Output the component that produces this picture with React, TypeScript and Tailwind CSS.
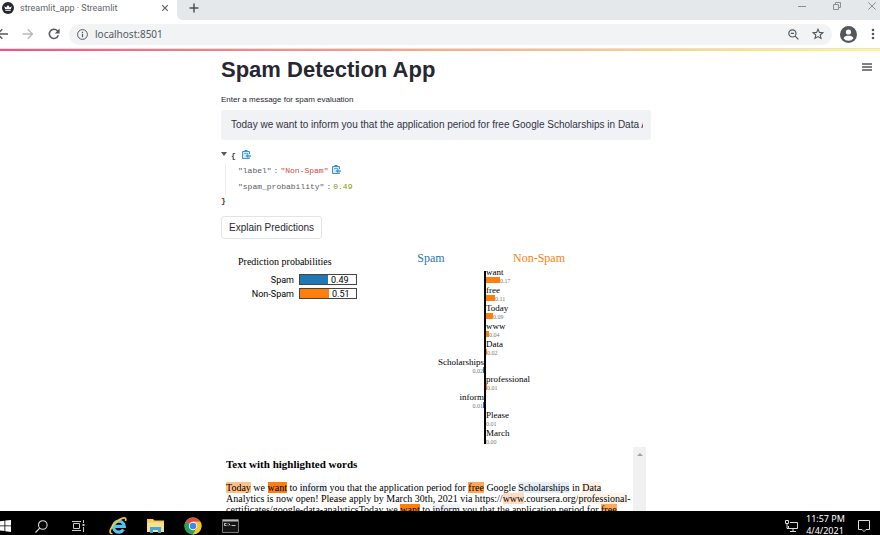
const message =
  "Today we want to inform you that the application period for free Google Scholarships in Data Analytics is now open! Please apply by March 30th, 2021 via https://www.coursera.org/professional-certificates/google-data-analytics";

type Weight = { word: string; value: string; bar: number; side: "spam" | "ham" };

const weights: Weight[] = [
  { word: "want", value: "0.17", bar: 14, side: "ham" },
  { word: "free", value: "0.11", bar: 9, side: "ham" },
  { word: "Today", value: "0.09", bar: 7, side: "ham" },
  { word: "www", value: "0.04", bar: 3, side: "ham" },
  { word: "Data", value: "0.02", bar: 1, side: "ham" },
  { word: "Scholarships", value: "0.02", bar: 1, side: "spam" },
  { word: "professional", value: "0.01", bar: 1, side: "ham" },
  { word: "inform", value: "0.01", bar: 1, side: "spam" },
  { word: "Please", value: "0.01", bar: 0, side: "ham" },
  { word: "March", value: "0.00", bar: 0, side: "ham" },
];

function TabStrip() {
  return (
    <div className="flex h-5 shrink-0 bg-white">
      <div className="flex w-[177px] items-center pr-2 pb-1 pl-[2px]">
        <svg className="size-3 shrink-0" viewBox="0 0 12 12" aria-hidden="true">
          <circle cx="6" cy="6" r="6" fill="#262730" />
          <path d="M2.2 4.2 4.2 5.4 6 3 7.8 5.4 9.8 4.2 8.8 7.2H3.2Z" fill="#fff" />
          <path d="M3.4 8h5.2v.8H3.4z" fill="#fff" />
        </svg>
        <span className="ml-[6px] flex-1 font-['Roboto',sans-serif] text-[9px] leading-4 whitespace-nowrap text-[#5f6368]">
          streamlit_app · Streamlit
        </span>
        <button aria-label="Close tab" className="text-[#5f6368]">
          <svg className="size-2" viewBox="0 0 8 8" stroke="currentColor" strokeWidth="1.2" fill="none">
            <path d="m1.2 1.2 5.6 5.6m0-5.6L1.2 6.8" />
          </svg>
        </button>
      </div>
      <div className="flex flex-1 items-center justify-between rounded-bl-md bg-[#e4e8eb] pr-1 pb-1 pl-3 text-[#4d5156]">
        <button aria-label="New tab">
          <svg className="size-[10px]" viewBox="0 0 10 10" stroke="currentColor" strokeWidth="1.5">
            <path d="M5 .5v9M.5 5h9" />
          </svg>
        </button>
        <div className="flex gap-[27px] pb-1 text-[#8b8f93]">
          <button aria-label="Minimize">
            <svg className="size-2" viewBox="0 0 8 8" stroke="currentColor">
              <path d="M0 4.5h8" />
            </svg>
          </button>
          <button aria-label="Restore">
            <svg className="size-2" viewBox="0 0 8 8" stroke="currentColor" fill="none">
              <path d="M.5 2.5h5v5h-5zM2.5 2.5v-2h5v5h-2" />
            </svg>
          </button>
          <button aria-label="Close">
            <svg className="size-2" viewBox="0 0 8 8" stroke="currentColor" fill="none">
              <path d="m.3.3 7.4 7.4m0-7.4L.3 7.7" />
            </svg>
          </button>
        </div>
      </div>
    </div>
  );
}

function Toolbar() {
  return (
    <div className="flex h-[29px] shrink-0 items-center border-b border-[#dfe2e8] bg-white pr-[2px] text-[#54585d]">
      <div className="flex w-[69px] items-center gap-[14px]">
        <button aria-label="Back" className="-ml-1">
          <svg className="size-3" viewBox="0 0 12 12" stroke="currentColor" strokeWidth="1.4" fill="none">
            <path d="M12 6H2M6.3 1.2 1.5 6l4.8 4.8" />
          </svg>
        </button>
        <button aria-label="Forward" className="text-[#b6b9bc]">
          <svg className="size-3" viewBox="0 0 12 12" stroke="currentColor" strokeWidth="1.3" fill="none">
            <path d="M.5 6h10M5.7 1.2 10.5 6l-4.8 4.8" />
          </svg>
        </button>
        <button aria-label="Reload">
          <svg className="size-3" viewBox="0 0 12 12" fill="none">
            <path d="M10.3 7.3A4.6 4.6 0 1 1 9.4 2.8L10.6 4" stroke="currentColor" strokeWidth="1.5" />
            <path d="M11.6.6v4.8H6.8z" fill="currentColor" />
          </svg>
        </button>
      </div>
      <div className="flex h-[21px] flex-1 items-center rounded-full bg-[#f1f3f4] px-2">
        <svg className="size-[11px] shrink-0" viewBox="0 0 11 11" fill="none" stroke="currentColor">
          <circle cx="5.5" cy="5.5" r="4.9" />
          <path d="M5.5 4.8v3.4M5.5 2.7v1.2" strokeWidth="1.2" />
        </svg>
        <input
          aria-label="Address"
          defaultValue="localhost:8501"
          className="ml-[7px] min-w-0 flex-1 bg-transparent text-[10px] leading-4 text-[#55595e] outline-none"
        />
        <button aria-label="Zoom">
          <svg className="size-[11px]" viewBox="0 0 11 11" fill="none" stroke="currentColor" strokeWidth="1.2">
            <circle cx="4.4" cy="4.4" r="3.6" />
            <path d="m7.1 7.1 3.3 3.3M2.8 4.4H6" />
          </svg>
        </button>
        <button aria-label="Bookmark" className="ml-[13px]">
          <svg className="size-3" viewBox="0 0 12 12" fill="none" stroke="currentColor" strokeWidth="1.1">
            <path d="m6 1.2 1.4 3.2 3.5.3-2.7 2.3.8 3.4L6 8.6l-3 1.8.8-3.4L1.1 4.7l3.5-.3z" />
          </svg>
        </button>
      </div>
      <button aria-label="Profile" className="ml-2">
        <svg className="size-[17px]" viewBox="0 0 17 17">
          <circle cx="8.5" cy="8.5" r="8.5" fill="#54585d" />
          <circle cx="8.5" cy="6" r="2.6" fill="#fff" />
          <path d="M3.5 12.3c.8-2 2.8-2.6 5-2.6s4.2.6 5 2.6a6.2 6.2 0 0 1-10 0z" fill="#fff" />
        </svg>
      </button>
      <button aria-label="Browser menu" className="mr-[2px] ml-[13px]">
        <svg className="h-3 w-[6px]" viewBox="0 0 6 12" fill="currentColor">
          <circle cx="3" cy="2" r="1.3" />
          <circle cx="3" cy="6" r="1.3" />
          <circle cx="3" cy="10" r="1.3" />
        </svg>
      </button>
    </div>
  );
}

function CopyIcon() {
  return (
    <button aria-label="Copy" className="mb-[3px] text-[#3b92d2]">
      <svg className="size-[9px]" viewBox="0 0 9 9" fill="none" stroke="currentColor">
        <path d="M7.5 4V1.5h-7v7h7V7.5" fill="#d3e8f7" />
        <path d="M2.5 1h3" strokeWidth="2" />
        <path d="M2 3.5h4" strokeWidth=".7" />
        <path d="M9 6H5.5" strokeWidth="1.3" />
        <path d="M6.3 3.8v4.4L3.6 6z" fill="currentColor" stroke="none" />
      </svg>
    </button>
  );
}

function JsonView() {
  return (
    <div className="mt-[9px] font-['Liberation_Mono',monospace] text-[8px] leading-[14px] whitespace-pre text-[#5a5d63]">
      <div className="flex items-center">
        <svg className="mb-1 h-1 w-[6px]" viewBox="0 0 6 4" fill="#4d5a60" aria-hidden="true">
          <path d="M0 0h6L3 4z" />
        </svg>
        <span className="mr-[6px] ml-1 font-bold text-[#3a3d44]">{"{"}</span>
        <CopyIcon />
      </div>
      <div className="ml-1 border-l border-[#ececec] pl-3 leading-4">
        <div className="flex items-center">
          <span>"label"</span>
          <span className="mx-[2px]">:</span>
          <span className="mr-1 text-[#cb4b45]">"Non-Spam"</span>
          <CopyIcon />
        </div>
        <div className="flex items-center">
          <span>"spam_probability"</span>
          <span className="mx-[2px]">:</span>
          <span className="text-[#859900]">0.49</span>
        </div>
      </div>
      <div className="leading-3 font-bold text-[#3a3d44]">{"}"}</div>
    </div>
  );
}

function Probabilities() {
  const rows = [
    { label: "Spam", value: "0.49", width: 28, color: "#1f77b4", y: 26 },
    { label: "Non-Spam", value: "0.51", width: 29, color: "#ff7f0e", y: 40 },
  ];
  return (
    <svg className="h-[60px] w-[150px] shrink-0" viewBox="0 0 150 60" role="img" aria-label="Prediction probabilities">
      <text x="17" y="17" fontSize="10" className="font-['Liberation_Serif',serif]">
        Prediction probabilities
      </text>
      {rows.map((r) => (
        <g key={r.label} className="font-['Roboto',sans-serif]" fontSize="9">
          <text x="73" y={r.y + 9} textAnchor="end">
            {r.label}
          </text>
          <rect x="78.5" y={r.y + 0.5} width="57" height="10" fill="#fff" stroke="#444" />
          <rect x="79" y={r.y + 1} width={r.width} height="9" fill={r.color} />
          <text x={82 + r.width} y={r.y + 9}>
            {r.value}
          </text>
        </g>
      ))}
    </svg>
  );
}

function WeightChart() {
  return (
    <svg
      className="h-[198px] w-[200px] shrink-0 font-['Liberation_Serif',serif]"
      viewBox="0 0 200 198"
      role="img"
      aria-label="Word weights"
    >
      <text x="60" y="14" fontSize="12" textAnchor="middle" fill="#1f77b4">
        Spam
      </text>
      <text x="168" y="14" fontSize="12" textAnchor="middle" fill="#ff7f0e">
        Non-Spam
      </text>
      {weights.map((w, i) => {
        const y = 27 + Math.round(i * 17.9);
        const ham = w.side === "ham";
        return (
          <g key={w.word} textAnchor={ham ? "start" : "end"}>
            <rect x={ham ? 115 : 113 - w.bar} y={y + 2} width={w.bar} height="6" fill={ham ? "#ff7f0e" : "#1f77b4"} />
            <text x={ham ? 115 : 113} y={y} fontSize="9">
              {w.word}
            </text>
            <text x={ham ? 115 + w.bar : 112} y={y + 8} fontSize="6" fill="#777">
              {w.value}
            </text>
          </g>
        );
      })}
      <path d="M114 23v173" stroke="#000" strokeWidth="2" />
    </svg>
  );
}

function Highlighted() {
  return (
    <div className="mt-px mr-[5px] flex font-['Liberation_Serif',serif]">
      <div className="min-w-0 flex-1 pt-[10px] pl-[5px]">
        <h2 className="text-[11px] leading-[14px] font-bold">Text with highlighted words</h2>
        <p className="mt-[11px] text-[10px] leading-[11px] [&_mark]:text-black">
          <mark className="bg-[#ffbf86]">Today</mark> we <mark className="bg-[#ff7f0e]">want</mark> to{" "}
          <mark className="bg-[#edf4f9]">inform</mark> you that the application period for{" "}
          <mark className="bg-[#ffa657]">free</mark> Google <mark className="bg-[#e3eef6]">Scholarships</mark> in{" "}
          <mark className="bg-[#fff0e2]">Data</mark> Analytics is now open! <mark className="bg-[#fff8f2]">Please</mark> apply by
          March 30th, 2021 via https://<mark className="bg-[#ffdcbd]">www</mark>.coursera.org/
          <mark className="bg-[#fff4ea]">professional</mark>-certificates/google-data-analyticsToday we{" "}
          <mark className="bg-[#ff7f0e]">want</mark> to <mark className="bg-[#edf4f9]">inform</mark> you that the application
          period for <mark className="bg-[#ffa657]">free</mark>
        </p>
      </div>
      <div className="flex w-[13px] justify-center bg-[#f1f1f1] pt-[6px]">
        <svg className="h-[3px] w-[6px]" viewBox="0 0 6 3" fill="#a3a3a3" aria-hidden="true">
          <path d="M3 0 6 3H0z" />
        </svg>
      </div>
    </div>
  );
}

function Taskbar() {
  return (
    <footer className="h-6 shrink-0 overflow-hidden bg-black text-white">
      <div className="flex h-[30px] items-center">
        <button aria-label="Start">
          <svg className="h-3 w-[11px]" viewBox="0 0 11 12" fill="#fff">
            <path d="M0 1.2 4.5.7v4.8H0zM5.3.6 11 0v5.5H5.3zM0 6.3h4.5v4.8L0 10.6zM5.3 6.3H11V12l-5.7-.7z" />
          </svg>
        </button>
        <button aria-label="Search" className="ml-6">
          <svg className="size-[13px]" viewBox="0 0 13 13" fill="none" stroke="#ddd" strokeWidth="1.1">
            <circle cx="7.8" cy="5" r="4.3" />
            <path d="M4.8 8.2.5 12.5" />
          </svg>
        </button>
        <button aria-label="Task view" className="ml-6">
          <svg className="h-3 w-[13px]" viewBox="0 0 13 12" fill="none" stroke="#ccc">
            <path d="M0 1.5h9M1.5 3.5h6v5h-6zM0 10.5h9M11.5 0v3M11.5 7v5" />
            <path d="M10.5 5h2" strokeWidth="2" />
          </svg>
        </button>
        <button aria-label="Internet Explorer" className="ml-6">
          <svg className="size-[18px]" viewBox="0 0 18 18" fill="none">
            <path d="M14.5 12.5a5.5 5.5 0 1 1 .8-3.2H6" stroke="#54c4f3" strokeWidth="3.2" />
            <path d="M3.5 16.5C-1.5 17 2 9 8 4.500 12 1.200 16.500-.2 16.800 2c.1.700-.1 1.300-.4 2" stroke="#f5c731" strokeWidth="1.7" />
          </svg>
        </button>
        <button aria-label="File Explorer" className="ml-5">
          <svg className="h-[14px] w-[17px]" viewBox="0 0 17 14">
            <path d="M0 0h6l1.5 1.5H17V13H0z" fill="#f3cb60" />
            <path d="M0 3.5h17V13H0z" fill="#fbe08b" />
            <path d="M3 14V8h11v6h-3v-3H6v3z" fill="#3fa9df" />
          </svg>
        </button>
        <button aria-label="Chrome" className="ml-5">
          <svg className="size-[18px]" viewBox="0 0 18 18">
            <circle cx="9" cy="9" r="8.5" fill="#f6c62d" />
            <path d="M9 9 1.64 4.75A8.5 8.5 0 0 1 16.36 4.75H9z" fill="#dd4b3e" />
            <path d="M9 9 1.64 4.75A8.5 8.5 0 0 0 9 17.5L12.7 11z" fill="#23a15d" />
            <path d="M9 4.75h7.36A8.5 8.5 0 0 1 9 17.5L12.7 11z" fill="#f6c62d" />
            <circle cx="9" cy="9" r="4.2" fill="#fff" />
            <circle cx="9" cy="9" r="3.3" fill="#4285f4" />
          </svg>
        </button>
        <button aria-label="Command Prompt" className="ml-5">
          <svg className="h-[14px] w-[17px]" viewBox="0 0 17 14">
            <path d="M.5.5h16v13H.5z" fill="#151515" stroke="#777" />
            <path d="M1 1h15v1.5H1z" fill="#b9bcc0" />
            <path d="M4.5 4.5H2.5v2h2M6 4.5v.7M6 6v.7M7 4.5l1 2M9.5 6.5h4" stroke="#ddd" strokeWidth=".9" fill="none" />
          </svg>
        </button>
        <svg className="ml-auto h-3 w-[13px]" viewBox="0 0 13 12" fill="none" stroke="#ddd" aria-hidden="true">
          <path d="M5 2.5h7.5v6H3.5V6M8 8.5v3M5 11.5h6M.5.5h3v3h-3zM2 3.5v5h2" />
        </svg>
        <div className="ml-2 w-[38px] pb-[2px] text-center text-[9px] leading-3 whitespace-nowrap">
          <div>11:57 PM</div>
          <div>4/4/2021</div>
        </div>
        <button aria-label="Notifications" className="mr-[10px] ml-[14px]">
          <svg className="size-3" viewBox="0 0 12 12" fill="none" stroke="#ddd">
            <path d="M.5.5h11v9H8L6 11.5 4 9.5H.5z" />
          </svg>
        </button>
      </div>
    </footer>
  );
}

export default function App() {
  return (
    <div className="flex h-screen flex-col overflow-hidden bg-white font-['Noto_Sans',sans-serif]">
      <TabStrip />
      <Toolbar />
      <div className="h-[2px] shrink-0 bg-linear-to-r from-[#f0527f] via-[#ffa980] to-[#fffa80]" />
      <main className="relative min-h-0 flex-1 overflow-hidden pr-2 font-['Liberation_Sans',sans-serif] text-[#262730]">
        <button aria-label="Menu" className="absolute top-3 right-2">
          <svg className="h-2 w-[10px]" viewBox="0 0 10 8" stroke="#55565e" strokeWidth="1.4">
            <path d="M0 1h10M0 4h10M0 7h10" />
          </svg>
        </button>
        <div className="mx-auto max-w-[430px] pt-[5px]">
          <h1 className="text-[22px] leading-7 font-bold">Spam Detection App</h1>
          <label htmlFor="message" className="mt-[10px] block text-[8px] leading-3">
            Enter a message for spam evaluation
          </label>
          <input
            id="message"
            defaultValue={message}
            className="mt-1 block h-[30px] w-full rounded-[3px] border-r-[6px] border-[#f0f2f6] bg-[#f0f2f6] pr-[2px] pb-[2px] pl-[10px] text-[10px] text-[#31333f] outline-none"
          />
          <JsonView />
          <button className="mt-[9px] block h-[23px] rounded-[3px] border border-[#e3e4e8] px-[7px] text-[10px]">
            Explain Predictions
          </button>
          <div className="mt-[9px] flex text-black">
            <Probabilities />
            <WeightChart />
          </div>
          <div className="text-black">
            <Highlighted />
          </div>
        </div>
      </main>
      <Taskbar />
    </div>
  );
}
